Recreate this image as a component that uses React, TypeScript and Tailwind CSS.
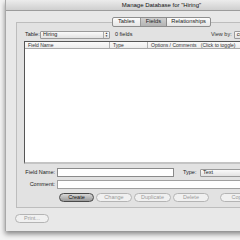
import React from "react";

const font = { fontFamily: '"Liberation Sans", Arial, sans-serif' };

function Pill({ label, primary, className = "" }: { label: string; primary?: boolean; className?: string }) {
  return (
    <div
      className={
        "h-[9px] rounded-full flex items-center justify-center text-[5.5px] leading-none shrink-0 whitespace-nowrap " +
        (primary
          ? "border border-[#4a4a4a] bg-gradient-to-b from-[#d8d8d8] to-[#9a9a9a] text-[#111] "
          : "border border-[#b4b4b4] bg-[#f0f0f0] text-[#9a9a9a] ") +
        className
      }
    >
      {label}
    </div>
  );
}

function Popup({ label, className = "" }: { label: string; className?: string }) {
  return (
    <div className={"h-[8px] shrink-0 flex items-center border border-[#9a9a9a] rounded-[1px] bg-gradient-to-b from-[#fafafa] to-[#e2e2e2] " + className}>
      <span className="flex-1 pl-[2px] text-[5.5px] leading-none text-[#222] whitespace-nowrap">{label}</span>
      <span className="w-[6px] h-full border-l border-[#a8a8a8] flex flex-col items-center justify-center text-[3px] leading-[3px] text-[#333]">
        <span>▲</span>
        <span>▼</span>
      </span>
    </div>
  );
}

export default function App() {
  return (
    <div className="w-[240px] h-[240px] overflow-hidden bg-[#f3f3f3] pl-[5px]" style={font}>
      <div className="w-[312px] h-[231px] bg-[#e8e8e8] border-l border-[#a9a9a9] flex flex-col shadow-[0_3px_5px_rgba(0,0,0,0.45)]">
        {/* Title bar */}
        <div className="h-[11px] shrink-0 bg-gradient-to-b from-[#ececec] to-[#cfcfcf] border-b border-[#9c9c9c] flex items-center justify-center">
          <span className="text-[6px] leading-none text-[#111]">Manage Database for "Hiring"</span>
        </div>

        {/* Tabs */}
        <div className="flex justify-center mt-[6px] -mb-[5px] relative z-10">
          <div className="flex h-[10px] border border-[#8e8e8e] rounded-[2px] bg-gradient-to-b from-[#fcfcfc] to-[#e6e6e6] text-[5.8px] leading-none text-[#222]">
            <div className="px-[5px] flex items-center border-r border-[#9a9a9a]">Tables</div>
            <div className="px-[5px] flex items-center bg-gradient-to-b from-[#cfcfcf] to-[#b4b4b4] border-r border-[#8a8a8a]">Fields</div>
            <div className="px-[4px] flex items-center">Relationships</div>
          </div>
        </div>

        {/* Group panel */}
        <div className="mx-[10px] h-[186px] border border-[#bdbdbd] bg-[#e2e2e2] flex flex-col pt-[8px] pl-[7px]">
          <div className="flex items-center h-[8px] text-[5.5px] leading-none text-[#222] whitespace-nowrap">
            <span className="ml-[1px] w-[15px] shrink-0">Table:</span>
            <Popup label="Hiring" className="w-[70px]" />
            <span className="ml-[5px] w-[30px] shrink-0">0 fields</span>
            <span className="ml-[66px] shrink-0 text-[#333]">View by:</span>
            <Popup label="creation order" className="ml-[2px] w-[60px]" />
          </div>

          {/* List */}
          <div className="mt-[2px] h-[123px] border-l border-t border-[#555] border-b-2 border-b-[#c4c4c4] bg-white flex flex-col">
            <div className="h-[7px] flex text-[5px] leading-none text-[#333] bg-gradient-to-b from-[#fbfbfb] to-[#ececec] border-b border-[#a8a8a8]">
              <div className="w-[85px] pl-[3px] flex items-center border-r border-[#b0b0b0]">Field Name</div>
              <div className="w-[38px] pl-[3px] flex items-center border-r border-[#b0b0b0]">Type</div>
              <div className="pl-[3px] flex items-center whitespace-pre">Options / Comments   (Click to toggle)</div>
            </div>
          </div>

          {/* Field name row */}
          <div className="flex items-center mt-[4px] text-[5.5px] leading-none text-[#222] whitespace-nowrap">
            <span className="w-[33px] shrink-0 text-right pr-[2px]">Field Name:</span>
            <div className="w-[117px] shrink-0 h-[9px] bg-white border border-[#8a8a8a]" />
            <span className="ml-[9px] w-[17px] shrink-0">Type:</span>
            <Popup label="Text" className="w-[60px]" />
          </div>

          {/* Comment row */}
          <div className="flex items-center mt-[3px] text-[5.5px] leading-none text-[#222] whitespace-nowrap">
            <span className="w-[33px] shrink-0 text-right pr-[2px]">Comment:</span>
            <div className="w-[240px] shrink-0 h-[9px] bg-white border border-[#a0a0a0]" />
          </div>

          {/* Buttons */}
          <div className="flex items-center mt-[4px] ml-[35px] gap-[2px]">
            <Pill label="Create" primary className="w-[35px]" />
            <Pill label="Change" className="w-[36px]" />
            <Pill label="Duplicate" className="w-[37px]" />
            <Pill label="Delete" className="w-[36px]" />
            <Pill label="Copy" className="ml-[9px] w-[36px]" />
          </div>
        </div>

        {/* Bottom row */}
        <div className="flex mt-[6px] ml-[9px]">
          <Pill label="Print..." className="w-[34px]" />
        </div>
      </div>
    </div>
  );
}
